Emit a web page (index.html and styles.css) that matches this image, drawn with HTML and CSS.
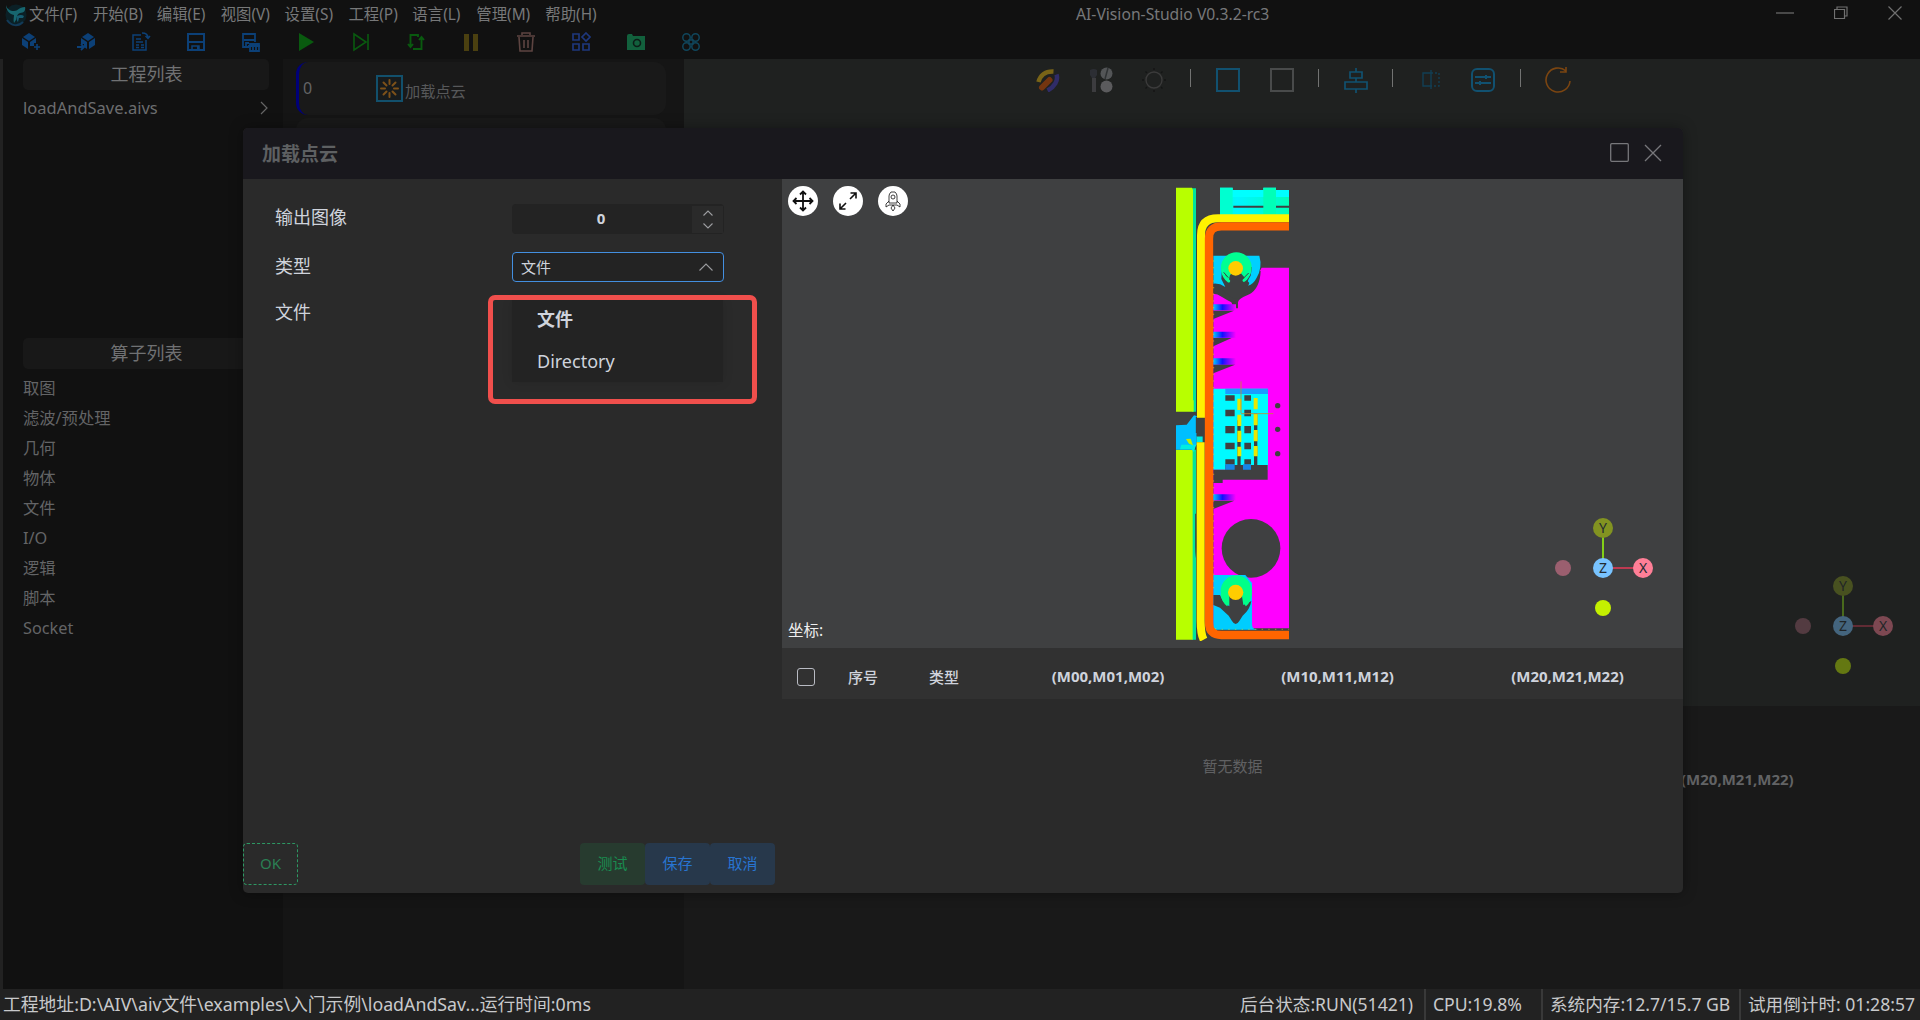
FILE: index.html
```html
<!DOCTYPE html>
<html lang="zh-CN">
<head>
<meta charset="utf-8">
<title>AI-Vision-Studio V0.3.2-rc3</title>
<link rel="stylesheet" href="styles.css">
</head>
<body>
<div class="app">
  <header class="titlebar">
    <svg class="logo" width="24" height="24" viewBox="0 0 24 24"><circle cx="11" cy="12" r="10.5" fill="#0b2026"/><path d="M1 2c1 4 4 6 8 6 4 0 5-4 11-4 1 3-1 6-5 6-3 1-3 4-4 7l-2 3c-1-3 0-6 0-8C4 11 1 7 1 2z" fill="#17666f"/><path d="M12 13q4-2 7 0l-1 2h-4l-1 4q-2-2-1-6z" fill="#155b70"/><path d="M2 17c4 6 11 7 16 2" stroke="#123a58" stroke-width="2" fill="none"/></svg>
    <nav class="menu">
      <span>文件(F)</span><span>开始(B)</span><span>编辑(E)</span><span>视图(V)</span><span>设置(S)</span><span>工程(P)</span><span>语言(L)</span><span>管理(M)</span><span>帮助(H)</span>
    </nav>
    <div class="app-name">AI-Vision-Studio V0.3.2-rc3</div>
    <div class="win-btns">
      <svg width="18" height="18" viewBox="0 0 18 18"><path d="M0 9h18"/></svg>
      <svg width="14" height="14" viewBox="0 0 14 14"><path d="M.5 3.500h10v9h-10zM3 3V1h10v9h-2"/></svg>
      <svg width="14" height="14" viewBox="0 0 14 14"><path d="M.5.5l13 13M13.500.5l-13 13"/></svg>
    </div>
  </header>

  <div class="toolbar">
    <svg viewBox="0 0 20 20" fill="#0c4077"><path d="M8 1l6 4-6 4-6-4zM1 6l6 4v7l-6-4zM15 6v5h-2v3H9v-4z"/><path d="M13 15h6M16 12v6" stroke="#0c4077" stroke-width="1.600"/></svg>
    <svg viewBox="0 0 20 20" fill="#0c4077"><path d="M12 1l6 4-6 4-6-4zM5 6l6 4v7l-3-2v-3H5zM19 6v7l-6 4v-7z"/><path d="M1 15h6M5 12l3 3-3 3" fill="none" stroke="#0c4077" stroke-width="1.800"/></svg>
    <svg viewBox="0 0 20 20" fill="none" stroke="#0c4077" stroke-width="1.500"><path d="M10 3H2v15h13V8M5 7h5M5 10h7M5 13h3M5 15.500h3M10 13h3M10 15.500h3M11 1c4 0 6 1 6 5M14.500 4L17 6.500 19 4"/></svg>
    <svg viewBox="0 0 20 20" fill="none" stroke="#0c4077" stroke-width="2"><path d="M2 2h16v16H2zM3 10h14"/><path d="M6 18v-4h7v4" stroke-width="1.500"/><path d="M11 14h2v3h-2z" fill="#0c4077" stroke="none"/></svg>
    <svg viewBox="0 0 20 20" fill="none" stroke="#0c4077" stroke-width="1.800"><path d="M8 15H2V2h12v8M3 8h11M5 14v-3h3"/><path d="M9 12h9v7H9zM7 14h12M12 14v4M15 14v4"/></svg>
    <svg viewBox="0 0 20 20" fill="#095a0f"><path d="M3 1l15 9-15 9z"/></svg>
    <svg viewBox="0 0 20 20" fill="none" stroke="#095a0f" stroke-width="1.600"><path d="M3 2l12 8-12 8zM17 2v16"/></svg>
    <svg viewBox="0 0 20 20" fill="none" stroke="#095a0f" stroke-width="1.900"><path d="M9 3H4.500v11M2 12l2.500 3L7 12M7 17h8.500V6M13 8l2.500-3L18 8M9 3h3v2"/></svg>
    <svg viewBox="0 0 20 20" fill="#4b4010"><path d="M3 2h5v17H3zM12 2h5v17h-5z"/></svg>
    <svg viewBox="0 0 20 20" fill="none" stroke="#5d4441" stroke-width="1.600"><path d="M1 4h18M6 3V1h8v2M3 5l1 14h12l1-14M8 8v8M12 8v8"/></svg>
    <svg viewBox="0 0 20 20" fill="none" stroke="#1e377c" stroke-width="1.700"><path d="M2 2h6v6H2zM2 12h6v6H2zM12 12h6v6h-6zM15 1l4 4-4 4-4-4z"/></svg>
    <svg viewBox="0 0 20 20"><path d="M1 4q0-2 2-2h3l1 2h12v14H1z" fill="#12613d"/><circle cx="11" cy="11" r="3.500" fill="none" stroke="#0c1d17" stroke-width="1.600"/></svg>
    <svg viewBox="0 0 20 20" fill="none" stroke="#10465c" stroke-width="1.500"><circle cx="5.500" cy="5.500" r="3.700"/><circle cx="14.500" cy="5.500" r="3.700"/><circle cx="5.500" cy="14.500" r="3.700"/><circle cx="14.500" cy="14.500" r="3.700"/><path d="M8 8h4v4H8z"/></svg>
  </div>

  <main class="workspace">
    <aside class="sidebar">
      <div class="projects">
        <h2 class="side-title">工程列表</h2>
        <div class="project"><span>loadAndSave.aivs</span><svg width="8" height="14" viewBox="0 0 8 14"><path d="M1 1l6 6-6 6" fill="none" stroke="#666" stroke-width="1.200"/></svg></div>
      </div>
      <h2 class="side-title">算子列表</h2>
      <ul class="operators"><li>取图</li><li>滤波/预处理</li><li>几何</li><li>物体</li><li>文件</li><li>I/O</li><li>逻辑</li><li>脚本</li><li>Socket</li></ul>
    </aside>

    <section class="flow">
      <div class="step active"><span class="step-no">0</span>
        <svg class="step-icon" width="27" height="27" viewBox="0 0 27 27"><path d="M1 1h25v25H1z" fill="#171b1d" stroke="#12506c" stroke-width="2"/><path d="M13.500 5v4M13.500 18v4M5 13.500h4M18 13.500h4M7.500 7.500l3 3M16.500 16.500l3 3M19.500 7.500l-3 3M10.500 16.500l-3 3" stroke="#7d5119" stroke-width="2" stroke-linecap="round"/></svg>
        <span class="step-name">加载点云</span></div>
      <div class="step"></div>
    </section>

    <section class="stage">
      <div class="scene">
        <div class="scene-tools">
          <svg width="24" height="24" viewBox="0 0 24 24" fill="none" stroke-width="4.500"><path d="M2.500 14C4 8 9 3 17.500 3.500" stroke="#796417"/><path d="M6 19.500L13.500 12" stroke="#74350f" stroke-width="6" stroke-linecap="round"/><path d="M20.500 6.500c2 6-2 12.500-9 16" stroke="#302c68"/></svg>
          <svg width="24" height="26" viewBox="0 0 24 26"><path d="M1 3q4-2 7 0v5l-2 3H3L1 8z" fill="#2c2e34"/><path d="M3 11h4v14H3z" fill="#3c3c3f"/><circle cx="17.500" cy="6.500" r="6" fill="#535557"/><circle cx="17.500" cy="19.500" r="6" fill="#5b5b5d"/><path d="M19 1l-3 11" stroke="#2f3234" stroke-width="1.500"/></svg>
          <svg width="24" height="24" viewBox="0 0 24 24" fill="none" stroke="#3b3b3b" stroke-width="1.400"><circle cx="12" cy="12" r="8"/><path stroke="#141515" d="M12 0v2M12 22v2M0 12h2M22 12h2M3.500 3.500L5 5M19 19l1.500 1.500M20.500 3.500L19 5M5 19l-1.500 1.500"/></svg>
          <i></i>
          <svg width="24" height="24" viewBox="0 0 24 24"><path d="M1 1h22v22H1z" fill="none" stroke="#115170" stroke-width="2"/></svg>
          <svg width="24" height="24" viewBox="0 0 24 24"><path d="M1 1h22v22H1z" fill="none" stroke="#494b4b" stroke-width="2"/></svg>
          <i></i>
          <svg width="24" height="26" viewBox="0 0 24 26" fill="none" stroke="#115170" stroke-width="1.700"><path d="M6 5h12v6H6zM1 15h22v7H1zM12 1v4M12 11v4M12 22v4"/></svg>
          <i></i>
          <svg width="24" height="24" viewBox="0 0 24 24" fill="none" stroke="#123f54" stroke-width="1.400"><path d="M12 5H4v13h8M12 2v19"/><path d="M12 5h8v13h-8" stroke-dasharray="2 2"/></svg>
          <svg width="24" height="24" viewBox="0 0 24 24" fill="none" stroke="#115170" stroke-width="2"><rect x="1" y="1" width="22" height="22" rx="5"/><path d="M4 9h16M4 15h16M15 7v4M9 13v4"/></svg>
          <i></i>
          <svg width="26" height="26" viewBox="0 0 26 26" fill="none" stroke="#7b4511" stroke-width="1.600"><path d="M21 4A12 12 0 1 0 25 14M21 0v5h-6"/></svg>
        </div>
        <svg class="gizmo dim" width="106" height="106" viewBox="-50 -53 106 106"><path class="gy" d="M0-35V0"/><path class="gx" d="M0 0h35"/><circle cy="-40" r="10" fill="#829321"/><circle cx="-40" r="8" fill="#9b5f6f"/><circle cx="40" r="10" fill="#ff7f97"/><circle r="10" fill="#78c3ff"/><circle cy="40" r="8" fill="#c4f000"/><text y="-35">Y</text><text x="40" y="5">X</text><text y="5">Z</text></svg>
      </div>
      <div class="matrix-head">(M20,M21,M22)</div>
    </section>
  </main>

  <footer class="status">
    <span class="path">工程地址:D:\AIV\aiv文件\examples\入门示例\loadAndSav...运行时间:0ms</span>
    <span class="cell run">后台状态:RUN(51421)</span>
    <span class="cell cpu">CPU:19.8%</span>
    <span class="cell mem">系统内存:12.7/15.7 GB</span>
    <span class="cell trial">试用倒计时: 01:28:57</span>
  </footer>
</div>

<div class="modal">
  <header class="modal-head"><h1>加载点云</h1>
    <svg width="19" height="19" viewBox="0 0 19 19"><rect x=".7" y=".7" width="17.600" height="17.600" rx="1"/></svg>
    <svg width="18" height="18" viewBox="0 0 18 18"><path d="M1 1l16 16M17 1L1 17"/></svg>
  </header>
  <div class="modal-body">
    <div class="form">
      <div class="row"><label>输出图像</label>
        <div class="number"><b>0</b><span class="spin"><svg width="10" height="6" viewBox="0 0 10 6"><path d="M.5 5.500L5 1l4.500 4.500"/></svg><svg width="10" height="6" viewBox="0 0 10 6"><path d="M.5.5L5 5 9.500.5"/></svg></span></div></div>
      <div class="row type"><label>类型</label>
        <div class="select"><span>文件</span><svg width="14" height="8" viewBox="0 0 14 8"><path d="M.5 7.500L7 1l6.500 6.500"/></svg>
          <div class="dropdown"><div class="chosen">文件</div><div>Directory</div></div>
          <div class="highlight"></div>
        </div></div>
      <div class="row file"><label>文件</label></div>
      <div class="actions"><button class="ok">OK</button><button class="test">测试</button><button class="blue">保存</button><button class="blue">取消</button></div>
    </div>
    <div class="result">
      <div class="viewer">
        <div class="round-tools">
          <svg viewBox="0 0 30 30"><path d="M5.500 15h19M15 5.500v19M8.500 12l-3 3 3 3M21.500 12l3 3-3 3M12 8.500l3-3 3 3M12 21.500l3 3 3-3" stroke-width="1.800"/></svg>
          <svg viewBox="0 0 30 30"><path d="M17 13l6-6M17.500 7H23v5.500M13 17l-6 6M7 17.500V23h5.500" stroke-width="1.600"/></svg>
          <svg viewBox="0 0 30 30"><path d="M11 17V10q0-2 2-4h4q2 2 2 4v7M11 15l-3 3v3l3-2h8l3 2v-3l-3-3M11 17h8M15 19l-2 3 2 3 2-3z" stroke-width=".8"/><circle cx="15" cy="11" r="2" stroke-width=".8"/></svg>
        </div>
        <svg class="cloud" width="113" height="454" viewBox="48 20 339 1362" preserveAspectRatio="none">
          <defs><linearGradient id="fade"><stop offset="0" stop-color="#00c8ff"/><stop offset=".4" stop-color="#1010ff"/><stop offset="1" stop-color="#f0f"/></linearGradient>
          <linearGradient id="top"><stop offset="0" stop-color="#00ffcf"/><stop offset=".25" stop-color="#00f5ff"/><stop offset="1" stop-color="#00ffb9"/></linearGradient></defs>
          <path fill="#00e59b" d="M96 24h12v670H96zM96 808h12v570H96z"/>
          <path fill="#b8ff00" d="M48 22h48l3 8v662H48zM48 660h53v34H48zM48 808h50v570H48z"/>
          <path fill="#00bfff" d="M48 735l32-2 22-28 8 2v86l-12 15H48z"/>
          <path fill="#00eee0" d="M64 793h44l-6 22-8-8H60zM110 768h18v18h-18z"/><path fill="#bff000" d="M78 776l14-1 7 20-12-5z"/>
          <path fill="#00ffff" d="M180 22h38v7h92v-7h38v7h39v75H180z"/><path fill="url(#top)" d="M180 50h207v54H180z"/><path fill="#00ffd0" d="M180 22h38v80h-38z"/><path fill="#00ffb8" d="M310 22h38v80h-38z"/>
          <path fill="#3f4041" d="M220 76h90v6h-90zM348 76h39v6h-39z"/>
          <path fill="#f0f" d="M160 338q20 4 50 14 60-20 95-90h82v1082H160z"/>
          <path fill="#3f4041" d="M160 338V300l60-28h82q-2 52-34 70-34 14-34 24v18h-12l-8-18q-12-6-28-16-14-10-26-10z"/>
          <path fill="#00d0ff" d="M160 226h138q10 35-8 66-10 20-26 24-6-10 8-30l4-26h-90l-2 36 12 24q-18-12-36-10z"/>
          <circle cx="229" cy="262" r="46" fill="#00ff92"/>
          <path fill="#3f4041" d="M210 284l8-6h24l26 30-10 26-20 20h-20l-36-28 20-8z"/>
          <path d="M188 270q2 20 18 32M268 274q-3 16-16 26" stroke="#00ff9c" stroke-width="9" stroke-linecap="round"/>
          <path d="M191 276l14 16M266 278l-14 14" stroke="#3f4041" stroke-width="3"/>
          <circle cx="227" cy="264" r="22" fill="#fc0"/>
          <g fill="url(#fade)"><path d="M160 372h68v18h-68zM160 454h68v18h-68zM160 534h68v19h-68zM160 942h68v18h-68z"/></g>
          <path fill="#3f4041" d="M160 391h62l-62 25zM160 473h55l-55 25zM160 553h65l-65 26zM160 961h63l-63 25z"/>
          <path fill="#00faff" d="M160 625h164v243H160z"/><path fill="#1a9dff" d="M196 625h128v16H196z"/>
          <path fill="#3f4041" d="M196 645h28v16h-28zM253 645h20v16h-20zM196 688h28v20h-28zM253 688h20v20h-20zM196 737h28v22h-28zM253 737h20v22h-20zM196 787h28v20h-28zM253 787h20v20h-20zM196 837h28v16h-28zM253 837h20v16h-20zM232 720h10v140h-10zM282 700h10v160h-10z"/>
          <path fill="#3f4041" d="M160 868h36v-14h127v44H188v10h-28z"/><path fill="#1685e7" d="M196 852h28v16h-28zM249 852h24v16h-24z"/>
          <g stroke="#e8e800" stroke-width="12" stroke-dasharray="34 14" fill="none"><path d="M238 655v173M287 653v175"/></g>
          <path d="M243 603v95M243 700h97" stroke="#bf8b32" stroke-width="2.500"/>
          <g fill="#3f4041"><circle cx="353" cy="676" r="8"/><circle cx="353" cy="747" r="8"/><circle cx="353" cy="820" r="8"/><circle cx="273" cy="1104" r="88"/></g>
          <path fill="#00cdff" d="M160 1184h96l20 24v124q0 16 18 16H160z"/>
          <circle cx="229" cy="1232" r="47" fill="#00ff88"/>
          <path fill="#3f4041" d="M160 1244h20l10 20 18 14v-30h38l4 26 24-12q-4 26-26 44l-10 16q-11 18-22 0l-10-16-26-24-20-8z"/>
          <path d="M186 1240q4 24 18 34M271 1240q-2 24-16 34" fill="none" stroke="#00ff88" stroke-width="9"/>
          <circle cx="227" cy="1236" r="23" fill="#fc0"/>
          <path d="M108 1000v100q0 30 6 50M110 710v48" stroke="#3f4041" stroke-width="5"/>
          <path fill="none" stroke="#fff200" stroke-width="24" d="M387 114H174q-51 0-51 51v547M122 786v535q0 40 9 57"/>
          <path fill="#3f4041" d="M110 713h24v55h-24z"/>
          <path fill="none" stroke="#ff6500" stroke-width="25" d="M387 138H184q-37 0-37 37v1152q0 37 37 37h203"/>
          <path stroke="#f3f000" stroke-width="1.500" stroke-dasharray="4 16" fill="none" d="M161 240v990M165 1345l17 2h205"/>
        </svg>
        <span class="coord">坐标:</span>
        <svg class="gizmo" width="106" height="106" viewBox="-50 -53 106 106"><path class="gy" d="M0-35V0"/><path class="gx" d="M0 0h35"/><circle cy="-40" r="10" fill="#829321"/><circle cx="-40" r="8" fill="#9b5f6f"/><circle cx="40" r="10" fill="#ff7f97"/><circle r="10" fill="#78c3ff"/><circle cy="40" r="8" fill="#c4f000"/><text y="-35">Y</text><text x="40" y="5">X</text><text y="5">Z</text></svg>
      </div>
      <div class="thead"><span><i class="check"></i></span><span>序号</span><span>类型</span><span class="m">(M00,M01,M02)</span><span class="m">(M10,M11,M12)</span><span class="m">(M20,M21,M22)</span></div>
      <div class="empty">暂无数据</div>
    </div>
  </div>
</div>
</body>
</html>
```
FILE: styles.css
```css
* { box-sizing: border-box; }
body { margin: 0; background: #111; color: #636466; font-family: "Noto Sans", "Noto Sans CJK SC", sans-serif; font-size: 16px; overflow: hidden; }
svg { display: block; flex: none; }
h1, h2, ul { margin: 0; padding: 0; font-weight: 400; list-style: none; }
.app { width: 1920px; height: 1020px; display: flex; flex-direction: column; }

.titlebar { height: 30px; flex: none; display: flex; align-items: center; position: relative; padding-left: 5px; }
.menu { display: flex; font-size: 15.400px; line-height: 30px; color: #777879; white-space: nowrap; }
.menu span { width: 63.900px; }
.menu span:nth-child(8) { width: 69px; }
.app-name { position: absolute; left: 1076px; top: 0; line-height: 28px; font-size: 15.700px; color: #77787a; white-space: nowrap; }
.win-btns { margin-left: auto; display: flex; gap: 40px; align-items: center; padding: 0 18px 5px 0; fill: none; stroke: #707070; stroke-width: 1.200; }

.toolbar { height: 29px; flex: none; display: flex; gap: 35px; padding: 2px 0 0 21px; }
.toolbar svg { width: 20px; height: 20px; }

.workspace { flex: 1; min-height: 0; display: flex; }
.sidebar { width: 283px; border-left: 3px solid #222; padding: 0 14px 0 20px; }
.projects { height: 279px; }
.side-title { height: 31px; border-radius: 5px; background: #181818; color: #707173; text-align: center; font-size: 18px; line-height: 30px; padding-left: 1px; }
.project { display: flex; justify-content: space-between; align-items: center; padding-right: 1px; height: 35px; font-size: 16.500px; line-height: 22px; color: #6c6d6f; }
.operators { padding-top: 4px; color: #636466; font-size: 16.300px; }
.operators li { height: 30px; line-height: 30px; }

.flow { width: 401px; background: #151515; padding: 3px 18px 0 13px; display: flex; flex-direction: column; gap: 3px; }
.step { height: 53px; border-radius: 12px; background: #191919; display: flex; align-items: center; position: relative; }
.step.active { border-left: 3px solid #000078; }
.step-no { width: 77px; padding-left: 4px; font-size: 16px; line-height: 20px; padding-bottom: 2px; }
.step-icon { margin-right: 2px; }
.step-name { font-size: 15.200px; color: #57585a; padding-top: 2px; }

.stage { flex: 1; display: flex; flex-direction: column; background: #191919; }
.scene { height: 647px; background: #1f2120; position: relative; }
.scene-tools { display: grid; grid-template-columns: 54px 52px 54px 18px 58px 50px 22px 54px 19px 58px 46px 28px 47px; justify-items: center; align-items: center; padding: 8px 0 0 337px; height: 34px; }
.scene-tools i { width: 1px; height: 18px; margin-bottom: 4px; background: #727372; }
.gizmo { position: absolute; right: 24px; bottom: 27px; stroke-width: 2; }
.gizmo text { font-size: 14px; text-anchor: middle; fill: #232b32; }
.gy { stroke: #83cf18; } .gx { stroke: #bd3a51; }
.dim { opacity: .42; }
.matrix-head { padding: 63px 0 0 997px; font-size: 15px; line-height: 20px; font-weight: 700; color: #626365; white-space: nowrap; }
.scene .gizmo { right: 21px; }

.status { height: 31px; flex: none; background: #222; display: flex; color: #c8c9cb; font-size: 17.600px; line-height: 30px; white-space: nowrap; }
.path { flex: 1; padding-left: 3px; font-size: 17.800px; }
.cell { padding-left: 7px; border-left: 2px solid #393939; }
.run { width: 193px; border-color: transparent; }
.cpu { width: 117px; } .mem { width: 198px; } .trial { width: 181px; }

.modal { position: absolute; left: 243px; top: 128px; width: 1440px; height: 765px; background: #2a2a2a; border-radius: 5px; overflow: hidden; box-shadow: 0 0 14px rgba(0,0,0,.35); display: flex; flex-direction: column; }
.app + .modal { color: #cfd3dc; }
.modal-head { height: 51px; flex: none; background: #19181d; display: flex; align-items: center; gap: 15px; padding: 0 21px 2px 19px; fill: none; stroke: #77777b; stroke-width: 1.300; }
.modal-head h1 { margin-right: auto; font-size: 19px; font-weight: 700; color: #5e6062; }
.modal-body { flex: 1; display: flex; min-height: 0; }
.form { width: 539px; display: flex; flex-direction: column; padding-top: 25px; }
.row { height: 48px; display: flex; align-items: flex-start; padding-left: 32px; font-size: 18px; }
.row label { width: 237px; line-height: 27px; }
.type label { line-height: 28px; }
.file label { line-height: 25px; }
.number, .select { width: 212px; height: 30px; border-radius: 4px; background: #232323; display: flex; align-items: center; position: relative; }
.number b { flex: 1; text-align: center; font-size: 15px; padding-right: 2px; line-height: 28px; height: 30px; }
.spin { width: 31px; height: 27px; margin-right: 1px; background: #2a2a2a; display: flex; flex-direction: column; align-items: center; justify-content: space-between; padding: 4px 0 4px; }
.spin svg, .select svg { fill: none; stroke: #9b9c9f; stroke-width: 1.100; }
.select { border: 1.500px solid #438fe0; padding: 0 10px 0 8px; justify-content: space-between; font-size: 15px; line-height: 26px; }
.dropdown { position: absolute; left: -1px; top: 47px; width: 211px; height: 82px; background: #232323; box-shadow: 0 0 10px rgba(0,0,0,.12); padding: 0 0 0 25px; font-size: 18px; }
.dropdown div { height: 42px; line-height: 38px; }
.chosen { font-weight: 700; }
.highlight { position: absolute; left: -25px; top: 42px; width: 269px; height: 109px; border: 5px solid #f04f4c; border-radius: 7px; }
.actions { margin-top: auto; margin-bottom: 8px; display: flex; }
button { width: 65px; height: 42px; border: 0; border-radius: 4px; padding: 0 0 3px; font: 15px "Noto Sans", "Noto Sans CJK SC", sans-serif; }
.ok { width: 55px; margin-right: 282px; border: 1px dashed #2d9863; background: none; color: #2b7f54; }
.test { background: #273b2f; color: #198d50; }
.blue { background: #27384b; color: #2874d0; }

.result { flex: 1; display: flex; flex-direction: column; }
.viewer { height: 469px; background: #3f4041; position: relative; display: flex; justify-content: center; align-items: center; }
.round-tools { position: absolute; left: 6px; top: 7px; display: flex; gap: 15px; fill: none; stroke: #111; }
.round-tools svg { width: 30px; height: 30px; border-radius: 50%; background: #fff; }
.coord { position: absolute; left: 6px; bottom: 8px; font-size: 15.500px; line-height: 20px; color: #eee; }
.thead { height: 51px; background: #313131; display: grid; grid-template-columns: 49px 81px 81px 230px 229px 231px; align-items: center; font-size: 15px; font-weight: 500; padding-top: 5px; }
.thead span { padding-left: 17px; }
.thead span:first-child { padding-left: 15px; }
.thead .m { text-align: center; padding: 0; font-size: 15px; font-weight: 700; }
.check { display: block; width: 18px; height: 18px; border: 1.500px solid #b9bbc3; border-radius: 3px; margin-top: 2px; }
.empty { padding-top: 55px; text-align: center; font-size: 15px; line-height: 24px; color: #606163; }
```
